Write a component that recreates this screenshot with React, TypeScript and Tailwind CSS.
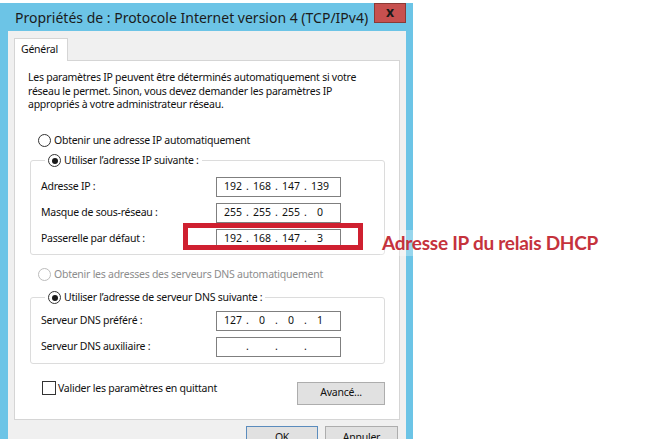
import { Fragment } from "react";

function Radio({ checked, disabled }: { checked?: boolean; disabled?: boolean }) {
  return (
    <span
      className={`flex h-[13px] w-[13px] shrink-0 items-center justify-center rounded-full border bg-white ${
        disabled ? "border-[#bcbcbc]" : "border-[#333333]"
      }`}
    >
      {checked && <span className="h-[6px] w-[6px] rounded-full bg-[#1a1a1a]" />}
    </span>
  );
}

function IpBox({ parts }: { parts: string[] }) {
  return (
    <div className="flex h-[20px] w-[125px] shrink-0 items-center border border-[#7f7f7f] bg-white pl-[4px] tracking-normal">
      {parts.map((p, i) => (
        <Fragment key={i}>
          {i > 0 && <span className="w-[5px] text-center">.</span>}
          <span className="w-[24px] text-center">{p}</span>
        </Fragment>
      ))}
    </div>
  );
}

function Row({ label, parts }: { label: string; parts: string[] }) {
  return (
    <div className="flex items-center">
      <span className="w-[175px] shrink-0">{label}</span>
      <IpBox parts={parts} />
    </div>
  );
}

function Button({ label, primary, className = "" }: { label: string; primary?: boolean; className?: string }) {
  return (
    <div
      className={`flex h-[23px] items-center justify-center border bg-[#e1e1e1] ${
        primary ? "border-[#5b8cbd]" : "border-[#adadad]"
      } ${className}`}
    >
      {label}
    </div>
  );
}

export default function App() {
  return (
    <div className="relative h-[439px] w-[650px] overflow-hidden bg-white font-['Noto_Sans',sans-serif] text-[10.5px] tracking-[-0.25px] text-[#111]">
      {/* fenêtre */}
      <div className="mt-[3px] flex h-[436px] w-[413px] flex-col bg-[#6cc4e6] pl-[8px] pr-[7px]">
        <div className="flex h-[28px] shrink-0 items-start justify-between">
          <span className="whitespace-nowrap pl-[7px] pt-[4px] text-[14px] tracking-normal text-[#1b1b1b]">
            Propriétés de : Protocole Internet version 4 (TCP/IPv4)
          </span>
          <div className="flex h-[20px] w-[32px] shrink-0 items-center justify-center border border-[#8a3a36] bg-[#c7504f] pb-[2px] text-[14px] font-bold leading-none text-[#1a1a1a]">
            x
          </div>
        </div>

        <div className="flex flex-1 flex-col bg-[#f0f0f0] px-[6px] pt-[7px]">
          {/* onglet */}
          <div className="relative z-10 -mb-[1px] flex h-[23px] w-[54px] items-center border border-b-0 border-[#d5d5d5] bg-white pl-[6px]">
            Général
          </div>

          {/* panneau */}
          <div className="flex h-[360px] flex-col border border-[#d5d5d5] bg-white pl-[15px] pr-[14px] pt-[10px]">
            <p className="-ml-[2px] whitespace-nowrap leading-[13.5px]">
              Les paramètres IP peuvent être déterminés automatiquement si votre
              <br />
              réseau le permet. Sinon, vous devez demander les paramètres IP
              <br />
              appropriés à votre administrateur réseau.
            </p>

            <div className="ml-[8px] mt-[21px] flex h-[16px] items-center gap-[3px]">
              <Radio />
              <span>Obtenir une adresse IP automatiquement</span>
            </div>

            <fieldset className="mt-[4px] rounded-[3px] border border-[#dcdcdc] px-[10px] pb-[5px]">
              <legend className="ml-[4px] flex h-[16px] items-center gap-[3px] pl-[3px] pr-[3px]">
                <Radio checked />
                <span>Utiliser l’adresse IP suivante :</span>
              </legend>
              <div className="mt-[8px] flex flex-col gap-[6px]">
                <Row label="Adresse IP :" parts={["192", "168", "147", "139"]} />
                <Row label="Masque de sous-réseau :" parts={["255", "255", "255", "0"]} />
                <Row label="Passerelle par défaut :" parts={["192", "168", "147", "3"]} />
              </div>
            </fieldset>

            <div className="ml-[8px] mt-[12px] flex h-[16px] items-center gap-[3px] text-[#8d8d8d]">
              <Radio disabled />
              <span>Obtenir les adresses des serveurs DNS automatiquement</span>
            </div>

            <fieldset className="mt-[7px] rounded-[3px] border border-[#dcdcdc] px-[10px] pb-[6px]">
              <legend className="ml-[4px] flex h-[16px] items-center gap-[3px] pl-[3px] pr-[3px]">
                <Radio checked />
                <span>Utiliser l’adresse de serveur DNS suivante :</span>
              </legend>
              <div className="mt-[5px] flex flex-col gap-[6px]">
                <Row label="Serveur DNS préféré :" parts={["127", "0", "0", "1"]} />
                <Row label="Serveur DNS auxiliaire :" parts={["", "", "", ""]} />
              </div>
            </fieldset>

            <div className="mt-[17px] flex items-start justify-between">
              <div className="ml-[12px] flex items-center gap-[2px]">
                <span className="h-[14px] w-[14px] border border-[#333333] bg-white" />
                <span>Valider les paramètres en quittant</span>
              </div>
              <Button label="Avancé..." className="mt-[1px] h-[21px] w-[88px]" />
            </div>
          </div>

          <div className="mt-[6px] flex justify-end gap-[7px] pr-[2px]">
            <Button label="OK" primary className="w-[72px]" />
            <Button label="Annuler" className="w-[73px]" />
          </div>
        </div>
      </div>

      {/* annotations */}
      <div className="absolute left-[183px] top-[223px] h-[27px] w-[180px] border-[5px] border-[#cf2030]" />
      <div className="absolute left-[380px] top-[230px] bg-white/30 px-[2px] font-['Lato',sans-serif] text-[19px] font-bold leading-[26px] text-[#c5323c]">
        Adresse IP du relais DHCP
      </div>
    </div>
  );
}
